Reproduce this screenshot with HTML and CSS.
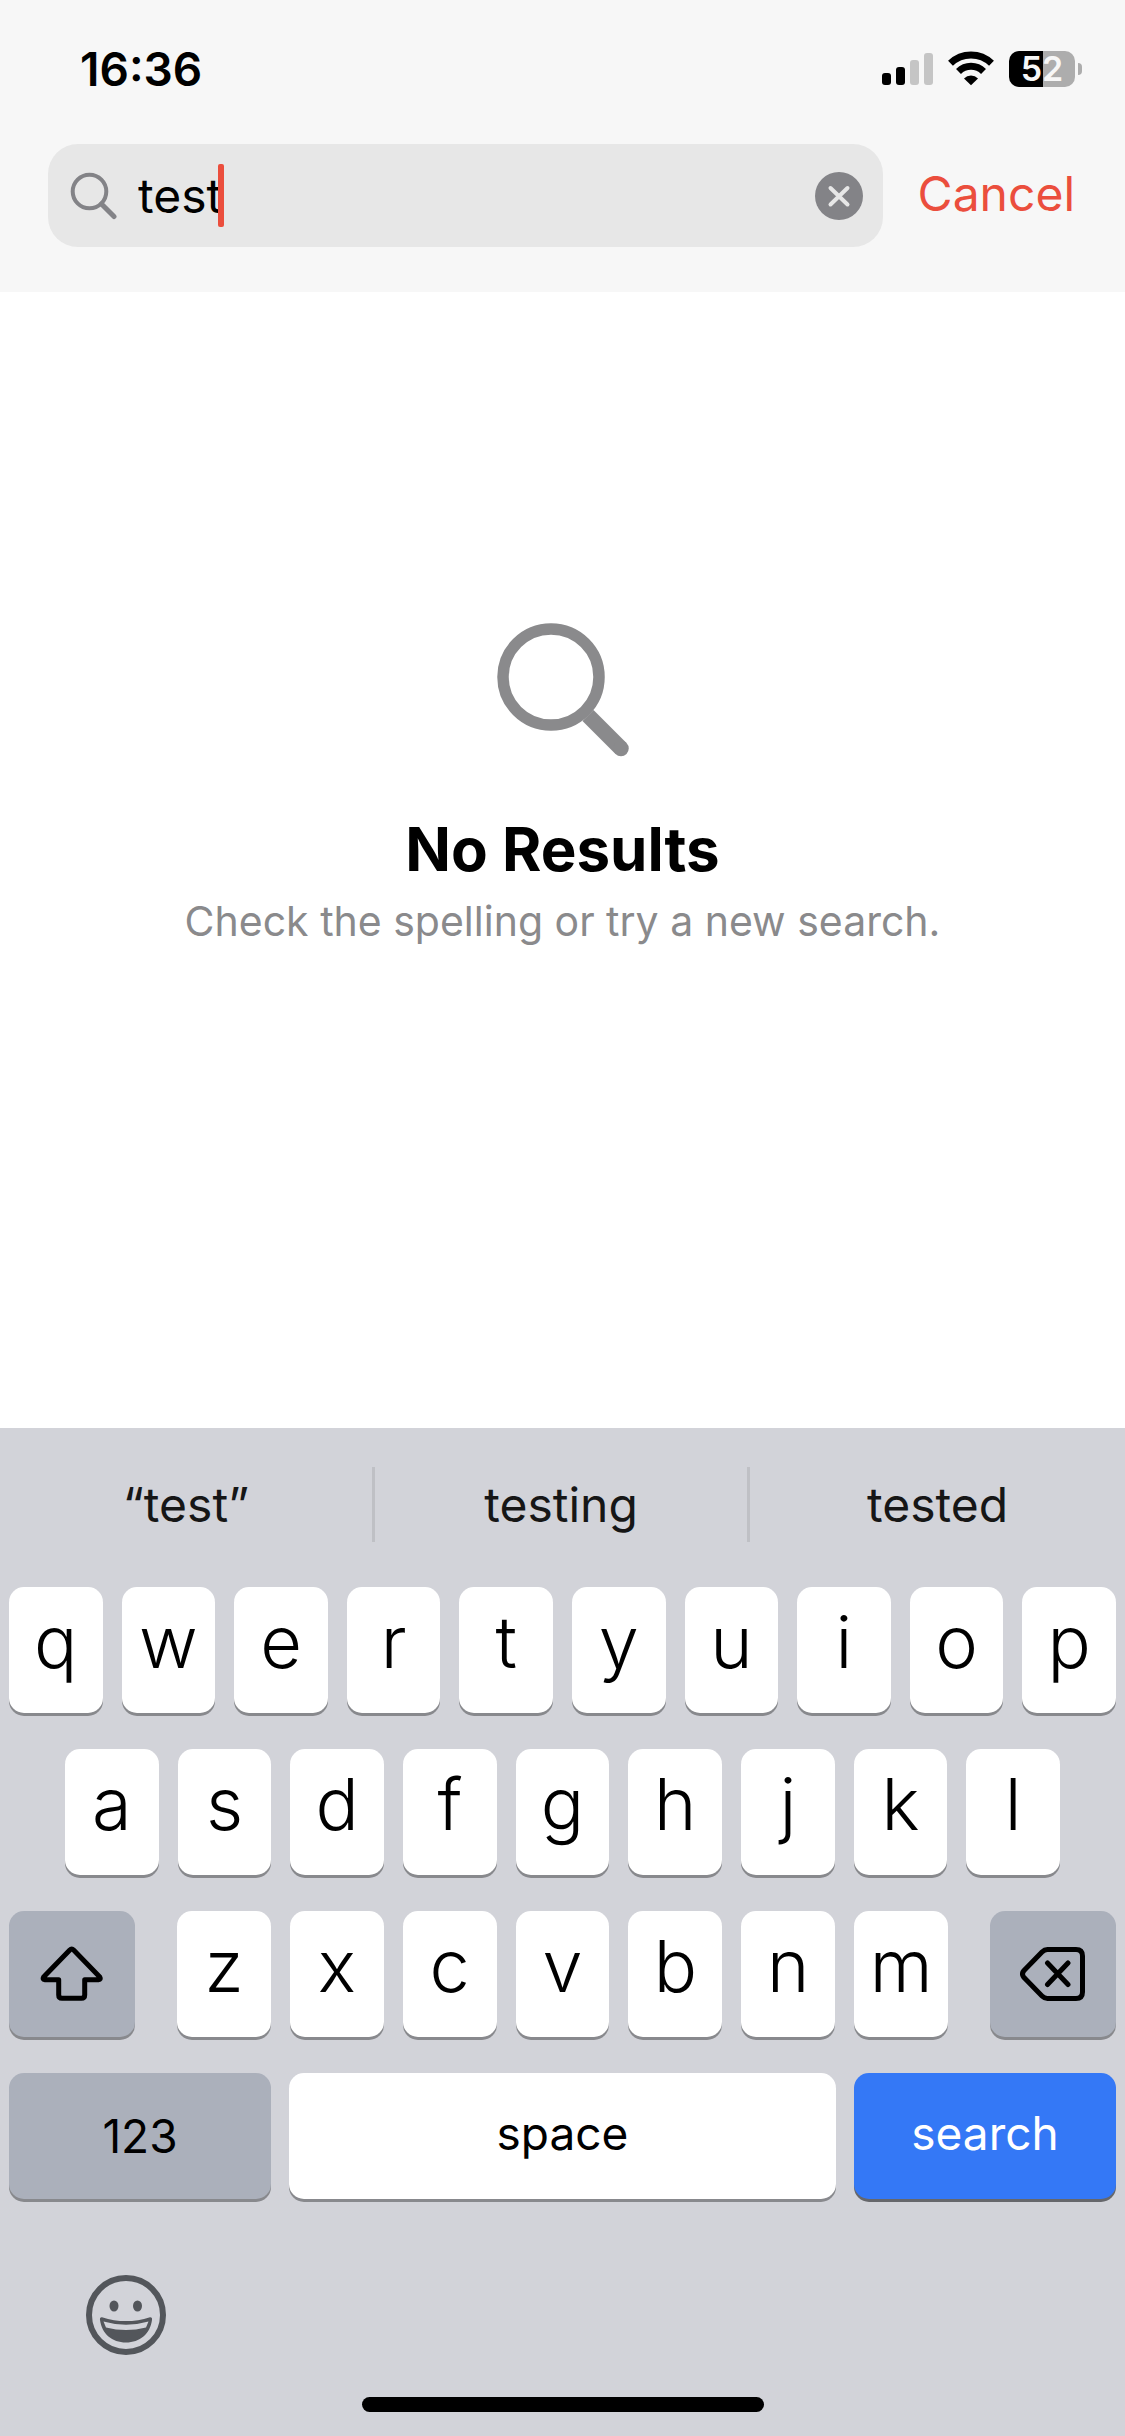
FILE: index.html
```html
<!DOCTYPE html>
<html lang="en">
<head>
<meta charset="utf-8">
<meta name="viewport" content="width=device-width, initial-scale=1">
<title>Search</title>
<link rel="stylesheet" href="styles.css">
</head>
<body>
<header class="header">
  <div class="status">
    <time class="clock">16:36</time>
    <div class="indicators">
      <svg class="signal" width="51" height="36" viewBox="0 0 51 36" role="img" aria-label="Signal">
        <rect x="0" y="22" width="9" height="12" rx="3"/>
        <rect x="14" y="16" width="9" height="18" rx="3"/>
        <rect x="28" y="9" width="9" height="25" rx="3" fill="#c5c5c5"/>
        <rect x="42" y="2" width="9" height="32" rx="3" fill="#c5c5c5"/>
      </svg>
      <svg class="wifi" width="46" height="36" viewBox="0 0 46 36" role="img" aria-label="Wi-Fi">
        <path d="M2.500 12.300A29.500 29.500 0 0 1 43.500 12.300M10.500 20.500A17.800 17.800 0 0 1 35.500 20.500" fill="none" stroke="#000" stroke-width="7"/>
        <path d="M23 34.200L16 27.400A10 10 0 0 1 30 27.400Z"/>
      </svg>
      <div class="battery"><span class="battery-body">52</span><span class="battery-cap"></span></div>
    </div>
  </div>
  <form class="search" role="search">
    <div class="field">
      <svg width="48" height="48" viewBox="0 0 48 48" fill="none" stroke="#838387" aria-hidden="true">
        <circle cx="19.500" cy="19.500" r="16.800" stroke-width="4"/>
        <path d="M31.500 32L44 44.500" stroke-width="5" stroke-linecap="round"/>
      </svg>
      <input class="query" type="text" value="test" aria-label="Search">
      <span class="caret"></span>
      <button class="clear" type="button" aria-label="Clear text">
        <svg width="48" height="48" viewBox="0 0 48 48"><circle cx="24" cy="24" r="24" fill="#838387"/><path d="M15.500 16L32.500 32.500M32.500 16L15.500 32.500" stroke="#e7e7e7" stroke-width="4" stroke-linecap="round"/></svg>
      </button>
    </div>
    <button class="cancel" type="button">Cancel</button>
  </form>
</header>
<main class="empty">
  <svg width="132" height="134" viewBox="0 0 132 134" fill="none" stroke="#8a8a8c" aria-hidden="true">
    <circle cx="54" cy="54" r="48" stroke-width="11.500"/>
    <path d="M91 92.500L124 125.500" stroke-width="15.500"/>
    <circle cx="124" cy="125.500" r="7.750" fill="#8a8a8c" stroke="none"/>
  </svg>
  <h1 class="title">No Results</h1>
  <p class="hint">Check the spelling or try a new search.</p>
</main>
<section class="keyboard" aria-label="Keyboard">
  <div class="suggestions">
    <button type="button">“test”</button>
    <button type="button">testing</button>
    <button type="button">tested</button>
  </div>
  <div class="keys">
    <div class="row">
      <button class="key">q</button><button class="key">w</button><button class="key">e</button><button class="key">r</button><button class="key">t</button><button class="key">y</button><button class="key">u</button><button class="key">i</button><button class="key">o</button><button class="key">p</button>
    </div>
    <div class="row row-inset">
      <button class="key">a</button><button class="key">s</button><button class="key">d</button><button class="key">f</button><button class="key">g</button><button class="key">h</button><button class="key">j</button><button class="key">k</button><button class="key">l</button>
    </div>
    <div class="row row-wide">
      <button class="key key-side" aria-label="Shift">
        <svg width="64" height="56" viewBox="0 0 64 56"><path d="M29.800 3.900Q31.700 2 33.600 3.900L59.800 31Q61.300 33.500 58.500 33.700H44.700V49Q44.700 52.300 41.400 52.300H22Q18.700 52.300 18.700 49V33.700H4.900Q2.100 33.500 3.600 31Z"/></svg>
      </button>
      <div class="row row-inner">
        <button class="key">z</button><button class="key">x</button><button class="key">c</button><button class="key">v</button><button class="key">b</button><button class="key">n</button><button class="key">m</button>
      </div>
      <button class="key key-side" aria-label="Delete">
        <svg width="66" height="56" viewBox="0 0 66 56"><path d="M27.500 3.400H56Q62.500 3.400 62.500 9.900V46Q62.500 52.500 56 52.500H27.500Q24.500 52.500 22 50L4 31.500Q1 28 4 24.500L22 5.900Q24.500 3.400 27.500 3.400ZM27.500 17L48 38.500M48 17L27.500 38.500"/></svg>
      </button>
    </div>
    <div class="row row-bottom">
      <button class="key key-gray key-num">123</button>
      <button class="key key-word">space</button>
      <button class="key key-word key-go">search</button>
    </div>
  </div>
  <div class="footer">
    <button class="emoji" aria-label="Emoji">
      <svg width="80" height="82" viewBox="0 0 80 82" fill="#53565b">
        <ellipse cx="40" cy="40" rx="37" ry="37" fill="none" stroke="#53565b" stroke-width="6"/>
        <ellipse cx="28" cy="31" rx="4.500" ry="5.500"/><ellipse cx="51.500" cy="31" rx="4.500" ry="5.500"/>
        <path fill-rule="evenodd" d="M16 42.200Q40 50 64 42.200Q66.500 42 66 45C64 59 54 67.500 40 67.500C26 67.500 16 59 14 45Q13.500 42 16 42.200ZM17.500 46.500L20 52.500Q40 57.500 60 52.500L62.500 46.500Q40 53 17.500 46.500Z"/>
      </svg>
    </button>
    <div class="home"></div>
  </div>
</section>
</body>
</html>
```
FILE: styles.css
```css
* { box-sizing: border-box; }
body {
  margin: 0;
  min-height: 100vh;
  display: flex;
  flex-direction: column;
  background: #fff;
  color: #000;
  font-family: Inter, "Liberation Sans", sans-serif;
}
button, input {
  margin: 0;
  padding: 0;
  border: 0;
  background: none;
  color: inherit;
  font: inherit;
}
svg { display: block; flex: none; }

.header { background: #f7f7f7; padding-bottom: 45px; }
.status {
  height: 144px;
  padding: 0 43px 0 80px;
  display: flex;
  justify-content: space-between;
  align-items: flex-start;
}
.clock { padding-top: 39px; font-size: 46px; line-height: 60px; font-weight: 600; }
.indicators { display: flex; align-items: center; gap: 15px; padding-top: 51px; }
.battery { display: flex; align-items: center; gap: 3px; }
.battery-body {
  width: 66px;
  height: 36px;
  border-radius: 10px;
  background: linear-gradient(to right, #000 52%, #adadad 52%);
  color: #f7f7f7;
  font-size: 34px;
  line-height: 36px;
  font-weight: 600;
  text-align: center;
}
.battery-cap { width: 4px; height: 12px; border-radius: 0 6px 6px 0; background: #adadad; }

.search { display: flex; align-items: center; gap: 35px; padding: 0 50px 0 48px; }
.field {
  flex: 1;
  height: 103px;
  padding: 0 20px 0 22px;
  display: flex;
  align-items: center;
  border-radius: 30px;
  background: #e7e7e7;
}
.query {
  field-sizing: content;
  margin-left: 20px;
  font-size: 48px;
  line-height: 64px;
  outline: 0;
}
.caret { width: 6px; height: 63px; margin-left: -4px; border-radius: 2px; background: #eb4e3d; }
.clear { margin-left: auto; }
.cancel { padding-bottom: 4px; color: #eb4e3d; font-size: 48px; line-height: 64px; }

.empty {
  flex: 1;
  display: flex;
  flex-direction: column;
  align-items: center;
  justify-content: center;
  padding-bottom: 148px;
  text-align: center;
}
.title { margin: 52px 0 0; font-size: 60px; line-height: 80px; font-weight: 700; }
.hint { margin: 4px 0 0; font-size: 41px; line-height: 56px; color: #8a8a8c; }

.keyboard { background: #d2d3d9; }
.suggestions { display: grid; grid-template-columns: repeat(3, 1fr); padding: 39px 0 45px; }
.suggestions button { height: 75px; font-size: 48px; line-height: 64px; color: #161616; }
.suggestions button:not(:last-child) { border-right: 3px solid #bfc0c5; }
.keys { display: grid; gap: 36px; padding: 0 9px; }
.row { display: grid; grid-auto-flow: column; grid-auto-columns: 1fr; gap: 19px; }
.row-inset { padding: 0 56px; }
.row-wide { grid-template-columns: 126px 1fr 126px; gap: 42px; }
.row-bottom { grid-template-columns: 262px 1fr 262px; gap: 18px; }
.key {
  height: 126px;
  padding-bottom: 16px;
  border-radius: 15px;
  background: #fff;
  box-shadow: 0 3px 0 #88898d;
  font-size: 72px;
  line-height: 88px;
  font-weight: 350;
}
.key-side, .key-gray { background: #abb0bb; }
.key-side {
  display: flex;
  align-items: center;
  justify-content: center;
  padding: 0;
}
.key-side svg { fill: none; stroke: #000; stroke-width: 5; stroke-linecap: round; stroke-linejoin: round; }
.key-num, .key-word { padding-bottom: 0; font-size: 46px; line-height: 60px; font-weight: 400; }
.key-word { padding-bottom: 6px; }
.key-go { background: #3478f6; color: #fff; box-shadow: 0 3px 0 #66676b; }

.footer { padding: 76px 86px 24px; }
.emoji { display: block; }
.home { width: 402px; height: 15px; margin: 40px auto 0; border-radius: 8px; background: #000; }
```
